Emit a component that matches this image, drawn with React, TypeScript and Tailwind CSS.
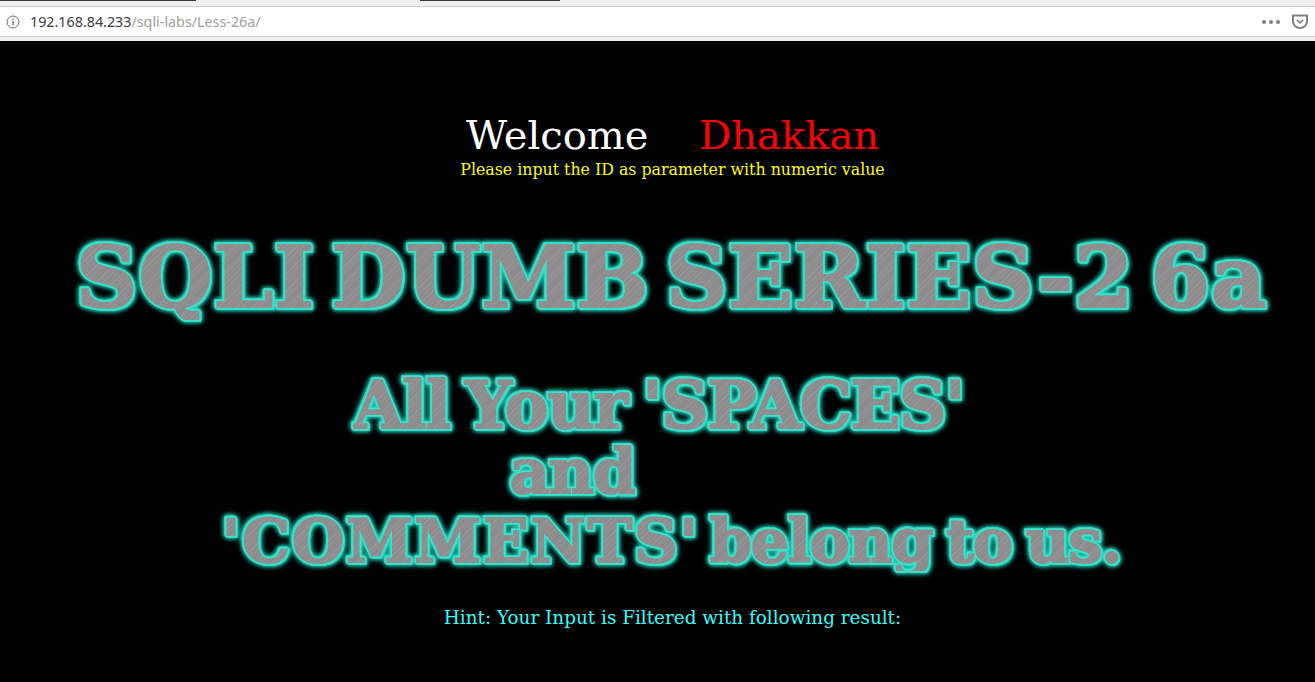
const serif = "font-['DejaVu_Serif','Liberation_Serif',serif]";
const art =
  "font-['DejaVu_Serif',serif] font-bold whitespace-pre leading-none text-transparent bg-clip-text bg-[repeating-linear-gradient(135deg,#969494_0px,#969494_1px,#848282_2px,#9a9898_3px,#7e7c7c_4px)] [-webkit-text-stroke:2px_transparent] [filter:drop-shadow(1px_0_0_#36e6cf)_drop-shadow(-1px_0_0_#36e6cf)_drop-shadow(0_1px_0_#36e6cf)_drop-shadow(0_-1px_0_#36e6cf)_drop-shadow(1px_1px_0_#2fd8c2)_drop-shadow(-1px_-1px_0_#2fd8c2)_drop-shadow(0_0_2px_#24cdb8)_drop-shadow(0_0_2px_#1aa596)]";

function BrowserBar() {
  return (
    <div className="h-[41px] bg-[#f0efed] flex flex-col">
      <div className="h-[6px] flex justify-between">
        <div className="w-[196px] h-[1px] bg-[#3c3b37]" />
        <div className="w-[140px] h-[1px] bg-[#3c3b37] mr-[755px]" />
      </div>
      <div className="h-[29px] bg-white border-t border-b border-[#cfccc8] flex items-center pl-[6px] pr-[7px] box-content">
        <svg width="14" height="14" viewBox="0 0 14 14" fill="none" stroke="#6b6b6b" strokeWidth="1">
          <circle cx="7" cy="7" r="6" />
          <path d="M7 6v4.2M7 3.6v1.2" strokeWidth="1.4" />
        </svg>
        <div className="ml-[10px] text-[14.3px] font-['Noto_Sans','Liberation_Sans',sans-serif] text-[#3a3a3a]">
          192.168.84.233<span className="text-[#a39e99]">/sqli-labs/Less-26a/</span>
        </div>
        <div className="ml-auto flex items-center gap-[3px]">
          <span className="w-[4px] h-[4px] rounded-full bg-[#808080]" />
          <span className="w-[4px] h-[4px] rounded-full bg-[#808080]" />
          <span className="w-[4px] h-[4px] rounded-full bg-[#808080]" />
        </div>
        <svg className="ml-[12px]" width="16" height="15" viewBox="0 0 16 15" fill="none" stroke="#808080">
          <path d="M1 1.5h14v6a7 6.5 0 0 1-14 0z" strokeWidth="2" />
          <path d="M4.8 5.8 8 8.8l3.2-3" strokeWidth="1.6" />
        </svg>
      </div>
    </div>
  );
}

export default function App() {
  return (
    <div className="h-[682px] overflow-hidden bg-black flex flex-col">
      <BrowserBar />
      <div className="flex flex-col items-center pl-[30px]">
        <div className={`${serif} mt-[68px] text-[40px] leading-[52px] whitespace-pre text-white`}>
          Welcome{"    "}<span className="text-[#ff0000]">Dhakkan</span>
        </div>
        <div className={`${serif} text-[15.8px] leading-[18px] text-[#ffff00]`}>
          Please input the ID as parameter with numeric value
        </div>
        <div className={`${art} mt-[56px] text-[85px] mr-[2px] tracking-[1px] [word-spacing:-14px]`}>SQLI DUMB SERIES-2 6a</div>
        <div className={`${art} mt-[53px] text-[65px] mr-[28px] tracking-[-1px] [word-spacing:-6px]`}>All Your 'SPACES'</div>
        <div className={`${art} mt-[3px] text-[62px] mr-[200px] tracking-[-1px]`}>and</div>
        <div className={`${art} mt-[8px] text-[60px] mr-[2px] tracking-[-1px] [word-spacing:-6px]`}>
          <span className="tracking-[2px] mr-[-4px]">'COMMENTS'</span> belong to us.
        </div>
        <div className={`${serif} mt-[35px] text-[18.4px] leading-[24px] text-[#33ffff]`}>
          Hint: Your Input is Filtered with following result:
        </div>
      </div>
    </div>
  );
}
